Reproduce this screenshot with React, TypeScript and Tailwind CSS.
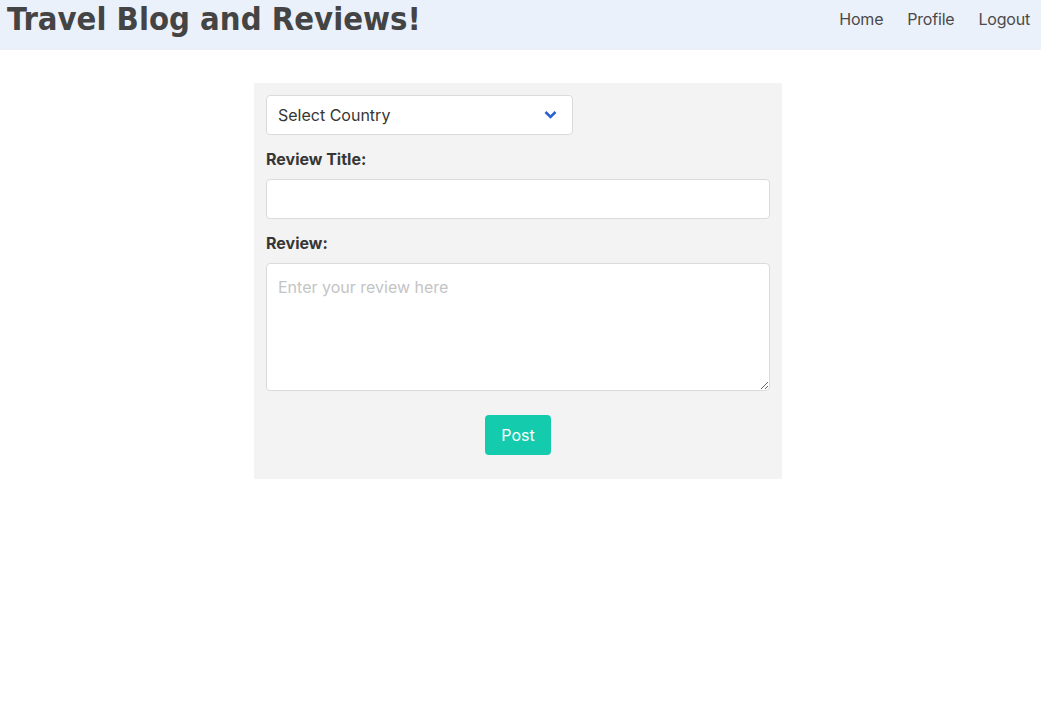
import { useState } from 'react';

const sans = { fontFamily: 'Inter, "Noto Sans", sans-serif' };

export default function App() {
  const [country, setCountry] = useState('');

  return (
    <div className="min-h-screen bg-white text-[#363636]" style={sans}>
      <nav className="flex h-[50px] items-center justify-between bg-[#ebf1fb] pl-[7px] pr-[11px]">
        <h1
          className="text-[32.5px] font-bold leading-none text-[#444444] -mt-[12px]"
          style={{ fontFamily: '"DejaVu Sans Condensed", "DejaVu Sans", Verdana, sans-serif' }}
        >
          Travel Blog and Reviews!
        </h1>
        <div className="flex -mt-[12px] text-base tracking-[-0.2px] text-[#4a4a4a]">
          <a className="px-3">Home</a>
          <a className="px-3">Profile</a>
          <a className="pl-3">Logout</a>
        </div>
      </nav>

      <form className="ml-[254px] mt-[33px] flex w-[528px] flex-col bg-[#f3f3f3] p-3">
        <div className="relative w-[307px]">
          <select
            value={country}
            onChange={(e) => setCountry(e.target.value)}
            className="h-10 w-full appearance-none rounded border border-[#dbdbdb] bg-white pl-[11px] pr-10 text-base text-[#363636] outline-none"
          >
            <option value="">Select Country</option>
          </select>
          <svg
            className="pointer-events-none absolute right-[16px] top-[15px]"
            width="13"
            height="10"
            viewBox="0 0 13 10"
            fill="none"
          >
            <path d="M1.5 2 L6.5 7 L11.5 2" stroke="#2a62d6" strokeWidth="2.6" />
          </svg>
        </div>

        <label className="mt-3 mb-2 text-base font-bold leading-6">Review Title:</label>
        <input className="h-10 w-full rounded border border-[#dbdbdb] bg-white px-3 text-base outline-none" />

        <label className="mt-3 mb-2 text-base font-bold leading-6">Review:</label>
        <textarea
          placeholder="Enter your review here"
          className="h-32 w-full rounded border border-[#dbdbdb] bg-white px-[11px] py-[11px] text-base leading-6 outline-none placeholder:text-[#c4c4c4]"
        />

        <div className="mt-6 mb-3 flex justify-center">
          <button
            type="button"
            className="h-10 w-[66px] rounded bg-[#15cbad] text-base text-white"
          >
            Post
          </button>
        </div>
      </form>
    </div>
  );
}
